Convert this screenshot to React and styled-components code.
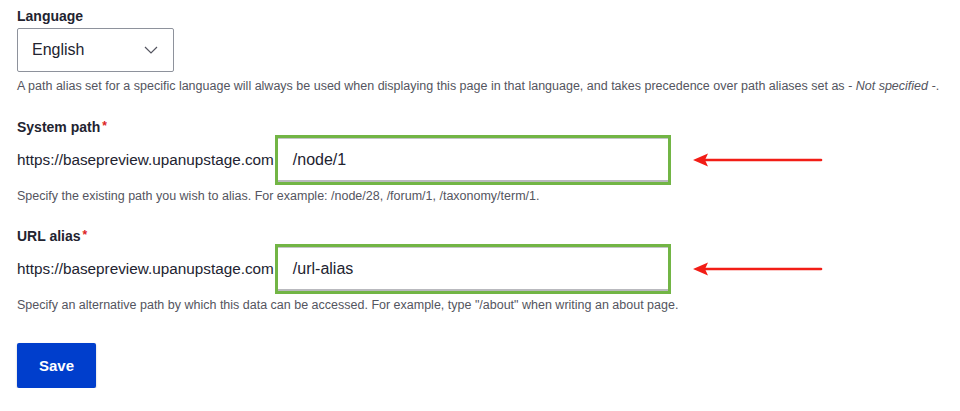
import React from 'react'
import styled, { createGlobalStyle } from 'styled-components'

const GlobalStyle = createGlobalStyle`
    body {
        margin: 0;
        background: #fff;
        font-family: "Liberation Sans", Arial, sans-serif;
        color: #222330;
    }
`;

const fields = [
    {
        label: 'System path',
        value: '/node/1',
        help: 'Specify the existing path you wish to alias. For example: /node/28, /forum/1, /taxonomy/term/1.',
    },
    {
        label: 'URL alias',
        value: '/url-alias',
        help: 'Specify an alternative path by which this data can be accessed. For example, type "/about" when writing an about page.',
    },
];

const Arrow = () => (
    <ArrowSvg width="130" height="16" viewBox="0 0 130 16">
        <line x1="12" y1="8" x2="128" y2="8" stroke="#f21d16" strokeWidth="2.6" strokeLinecap="round" />
        <polygon points="0,8 15,1.5 12,8 15,14.5" fill="#f21d16" />
    </ArrowSvg>
);

const App = () => {
  return (
    <>
        <GlobalStyle />
        <Page>
            <Label>Language</Label>
            <Select>
                <span>English</span>
                <svg width="14" height="8" viewBox="0 0 14 8">
                    <polyline points="1,1 7,7 13,1" fill="none" stroke="#545560" strokeWidth="1.2" />
                </svg>
            </Select>
            <Help>
                A path alias set for a specific language will always be used when displaying this page in that language, and takes precedence over path aliases set as <em>- Not specified -</em>.
            </Help>

            {fields.map(field => (
                <Field key={field.label}>
                    <Label>
                        {field.label}<Required>*</Required>
                    </Label>
                    <Row>
                        <Prefix>https://basepreview.upanupstage.com</Prefix>
                        <Highlight>
                            <Input>{field.value}</Input>
                        </Highlight>
                        <Arrow />
                    </Row>
                    <Help $tight>{field.help}</Help>
                </Field>
            ))}

            <SaveButton>Save</SaveButton>
        </Page>
    </>
  )
}

const Page = styled.div`
    padding: 8px 17px 0 17px;
`;

const Label = styled.div`
    font-size: 14px;
    font-weight: 700;
    line-height: 16px;
    height: 16px;
    color: #222330;
    display: flex;
    align-items: flex-start;
`;

const Required = styled.span`
    color: #dc2323;
    font-size: 12px;
    line-height: 10px;
    margin-left: 2px;
    margin-top: 2px;
`;

const Select = styled.div`
    margin-top: 4px;
    box-sizing: border-box;
    width: 157px;
    height: 44px;
    border: 1px solid #8e929c;
    border-radius: 2px;
    display: flex;
    align-items: center;
    justify-content: space-between;
    padding: 0 15px 0 14px;
    font-size: 16px;
    color: #222330;
`;

const Help = styled.div`
    margin-top: ${props => (props.$tight ? '3px' : '6px')};
    font-size: 12.5px;
    line-height: 16px;
    color: #545560;
    white-space: nowrap;

    em {
        font-style: italic;
    }
`;

const Field = styled.div`
    margin-top: 25px;

    & + & {
        margin-top: 24px;
    }
`;

const Row = styled.div`
    display: flex;
    align-items: center;
    height: 50px;
`;

const Prefix = styled.div`
    font-size: 15.3px;
    color: #222330;
    margin-right: 1px;
    white-space: nowrap;
`;

const Highlight = styled.div`
    box-sizing: border-box;
    width: 396px;
    height: 50px;
    border: 3px solid #72b545;
    display: flex;
`;

const Input = styled.div`
    flex: 1;
    box-sizing: border-box;
    border-top: 1px solid #c4c4c8;
    border-bottom: 2px solid #b9b9be;
    display: flex;
    align-items: center;
    padding-left: 15px;
    font-size: 16px;
    color: #222330;
`;

const ArrowSvg = styled.svg`
    margin-left: 22px;
    flex-shrink: 0;
`;

const SaveButton = styled.button`
    margin-top: 30px;
    width: 79px;
    height: 45px;
    border: none;
    border-radius: 2px;
    background: #003ecc;
    color: #fff;
    font-family: inherit;
    font-size: 15px;
    font-weight: 700;
    box-shadow: 0 1px 2px rgba(0, 0, 0, 0.25);
    cursor: pointer;
`;

export default App
